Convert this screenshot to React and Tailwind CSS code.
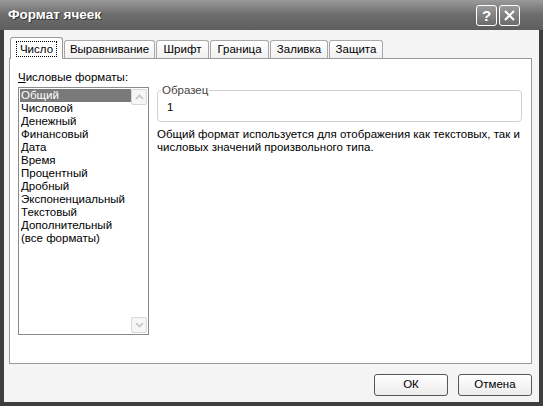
import React from 'react';

/* ── data ── */
const tabs = [
    { label: 'Число', w: 'w-[53px]', active: true },
    { label: 'Выравнивание', w: 'w-[91px]' },
    { label: 'Шрифт', w: 'w-[53px]' },
    { label: 'Граница', w: 'w-[59px]' },
    { label: 'Заливка', w: 'w-[58px]' },
    { label: 'Защита', w: 'w-[54px]' },
];

const formats = [
    'Общий',
    'Числовой',
    'Денежный',
    'Финансовый',
    'Дата',
    'Время',
    'Процентный',
    'Дробный',
    'Экспоненциальный',
    'Текстовый',
    'Дополнительный',
    '(все форматы)',
];

const font = { fontFamily: "'Liberation Sans', Arial, sans-serif" };

/* ── title bar buttons ── */
const TitleBtn = ({ children }) => (
    <div className="w-[21px] h-[21px] rounded-[3px] border border-white bg-gradient-to-b from-[#9a9a9a] to-[#6a6a6a] flex items-center justify-center">
        {children}
    </div>
);

/* ── scroll arrow ── */
const ScrollArrow = ({ down }) => (
    <div className="w-[16px] h-[16px] rounded-[2px] border border-[#d8d8d8] bg-[#f6f6f6] flex items-center justify-center">
        <svg width="9" height="6" viewBox="0 0 9 6">
            <path
                d={down ? 'M1 1 L4.5 4.5 L8 1' : 'M1 5 L4.5 1.5 L8 5'}
                fill="none"
                stroke="#c4c4c4"
                strokeWidth="1.6"
            />
        </svg>
    </div>
);

const Button = ({ children }) => (
    <div className="w-[74px] h-[22px] rounded-[3px] border border-[#555] bg-gradient-to-b from-white to-[#ececec] flex items-center justify-center text-[11.5px] text-black">
        {children}
    </div>
);

export default function App() {
    return (
        <div className="w-[543px] h-[406px] bg-[#3e3e3e] flex flex-col overflow-hidden" style={font}>
            {/* title bar */}
            <div className="h-[30px] flex items-center justify-between pl-[8px] pr-[23px] bg-gradient-to-b from-[#9a9a9a] via-[#6c6c6c] to-[#5e5e5e]">
                <span className="text-white font-bold text-[13.5px] [text-shadow:1px_1px_0_#333]">Формат ячеек</span>
                <div className="flex gap-[2px]">
                    <TitleBtn>
                        <span className="text-white font-bold text-[15px] leading-none">?</span>
                    </TitleBtn>
                    <TitleBtn>
                        <svg width="11" height="11" viewBox="0 0 11 11">
                            <path d="M1 1 L10 10 M10 1 L1 10" stroke="white" strokeWidth="2" />
                        </svg>
                    </TitleBtn>
                </div>
            </div>

            {/* body */}
            <div className="flex-1 mx-[4px] mb-[4px] bg-[#f4f4f4] flex flex-col pl-[5px] pr-[7px] pt-[7px]">
                {/* tabs */}
                <div className="flex items-end gap-[1px] pl-[1px] h-[21px] relative z-10">
                    {tabs.map((t) =>
                        t.active ? (
                            <div
                                key={t.label}
                                className={`${t.w} h-[22px] -mb-[1px] bg-white border border-b-0 border-[#9a9a9a] rounded-t-[3px] flex items-center justify-center text-[11.5px] text-black`}
                            >
                                <span className="border border-dotted border-black px-[3px] leading-[14px]">{t.label}</span>
                            </div>
                        ) : (
                            <div
                                key={t.label}
                                className={`${t.w} h-[18px] bg-gradient-to-b from-white to-[#f0f0f0] border border-b-0 border-[#a8a8a8] rounded-t-[3px] flex items-center justify-center text-[11.5px] text-black`}
                            >
                                {t.label}
                            </div>
                        )
                    )}
                </div>

                {/* panel */}
                <div className="h-[306px] bg-white border border-[#9a9a9a] flex gap-[8px] pl-[8px] pr-[9px] pt-[11px]">
                    {/* left: list */}
                    <div className="flex flex-col w-[131px]">
                        <div className="text-[11.5px] text-black leading-[14px] mb-[3px]">
                            <span className="underline">Ч</span>исловые форматы:
                        </div>
                        <div className="h-[248px] border border-[#8a8a8a] bg-white flex p-[1px]">
                            <div className="flex-1 flex flex-col">
                                {formats.map((f, i) => (
                                    <div
                                        key={f}
                                        className={`h-[13px] leading-[13px] text-[11.5px] pl-[1px] whitespace-nowrap ${
                                            i === 0 ? 'bg-[#7a7a7a] text-white' : 'text-black'
                                        }`}
                                    >
                                        {f}
                                    </div>
                                ))}
                            </div>
                            <div className="w-[16px] flex flex-col justify-between">
                                <ScrollArrow />
                                <ScrollArrow down />
                            </div>
                        </div>
                    </div>

                    {/* right: sample + description */}
                    <div className="flex-1 flex flex-col pt-[20px]">
                        <div className="relative h-[32px] border border-[#d0d0d0] rounded-[4px] flex items-center pl-[9px] pt-[4px]">
                            <span className="absolute -top-[8px] left-[3px] bg-white px-[1px] text-[11.5px] leading-[14px] text-[#444]">
                                Образец
                            </span>
                            <span className="text-[11.5px] text-black">1</span>
                        </div>
                        <p className="mt-[6px] text-[11.5px] leading-[13px] text-black whitespace-nowrap">
                            Общий формат используется для отображения как текстовых, так и
                            <br />
                            числовых значений произвольного типа.
                        </p>
                    </div>
                </div>

                {/* buttons */}
                <div className="flex justify-end gap-[10px] mt-[10px]">
                    <Button>ОК</Button>
                    <Button>Отмена</Button>
                </div>
            </div>
        </div>
    );
}
